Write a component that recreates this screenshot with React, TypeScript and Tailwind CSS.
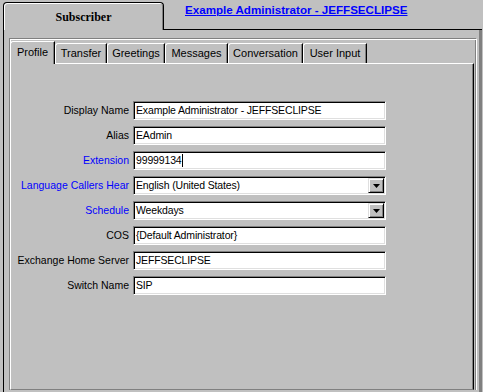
const tabs = [
  { label: "Profile", w: "w-[45px]", active: true },
  { label: "Transfer", w: "w-[52px]" },
  { label: "Greetings", w: "w-[58px]" },
  { label: "Messages", w: "w-[63px]" },
  { label: "Conversation", w: "w-[75px]" },
  { label: "User Input", w: "w-[64px]" },
];

const fields: { label: string; value: string; blue?: boolean; select?: boolean; caret?: boolean }[] = [
  { label: "Display Name", value: "Example Administrator - JEFFSECLIPSE" },
  { label: "Alias", value: "EAdmin" },
  { label: "Extension", value: "99999134", blue: true, caret: true },
  { label: "Language Callers Hear", value: "English (United States)", blue: true, select: true },
  { label: "Schedule", value: "Weekdays", blue: true, select: true },
  { label: "COS", value: "{Default Administrator}" },
  { label: "Exchange Home Server", value: "JEFFSECLIPSE" },
  { label: "Switch Name", value: "SIP" },
];

const Field = ({ value, select, caret }: { value: string; select?: boolean; caret?: boolean }) => (
  <div className="relative w-[253px] h-[19px] bg-white border border-t-[#808080] border-l-[#808080] border-r-white border-b-white shadow-[inset_1px_1px_0_#000,inset_-1px_-1px_0_#dfdfdf] flex items-center pl-[2px]">
    <span className="leading-none whitespace-nowrap tracking-[-0.15px] text-[10.5px]">{value}</span>
    {caret && <span className="w-px h-[13px] bg-black" />}
    {select && (
      <div className="absolute right-[1px] top-[1px] w-[16px] h-[15px] bg-[#c0c0c0] border border-t-[#dfdfdf] border-l-[#dfdfdf] border-r-black border-b-black shadow-[inset_1px_1px_0_#fff,inset_-1px_-1px_0_#808080] flex items-center justify-center">
        <svg width="7" height="4" viewBox="0 0 7 4">
          <path d="M0 0h7L3.5 4z" fill="#000" />
        </svg>
      </div>
    )}
  </div>
);

export default function App() {
  return (
    <div
      className="w-[483px] h-[392px] bg-[#c0c0c0] flex flex-col pl-[3px] pr-[1px] overflow-hidden text-[10.5px] text-black"
      style={{ fontFamily: '"Liberation Sans", Arial, sans-serif' }}
    >
      <div className="h-[30px] flex shrink-0">
        <div className="mt-[2px] w-[161px] h-[28px] border border-b-0 border-black rounded-t-[4px] shadow-[inset_1px_1px_0_#fff,inset_-1px_0_0_#808080] flex items-center justify-center">
          <span
            className="font-bold text-[12px] pt-[1px]"
            style={{ fontFamily: '"Liberation Serif", "Times New Roman", serif' }}
          >
            Subscriber
          </span>
        </div>
        <div className="flex-1 border-b border-black pl-[21px] pt-[3px]">
          <a className="text-[#0000ff] font-bold underline text-[11.6px] leading-[13px] cursor-pointer">
            Example Administrator - JEFFSECLIPSE
          </a>
        </div>
      </div>

      <div className="flex-1 flex flex-col border-l border-black border-r-[3px] border-r-[#808080] pt-[8px] pl-[5px] pr-[2px] pb-[2px]">
        <div className="flex-1 flex flex-col border border-b-0 border-[#808080] border-r-white shadow-[inset_1px_1px_0_#fff,inset_-1px_0_0_#808080] pt-[2px] pr-[2px]">
          <div className="h-[22px] flex items-end shrink-0 relative z-10 text-[11px]">
            {tabs.map((t) => (
              <div
                key={t.label}
                className={`${t.w} ${t.active ? "h-[23px] -mb-px bg-[#c0c0c0] pb-[2px]" : "h-[20px]"} border-t border-l border-white rounded-tl-[3px] border-r border-r-black shadow-[inset_-1px_0_0_#808080] flex items-center justify-center whitespace-nowrap`}
              >
                {t.label}
              </div>
            ))}
          </div>
          <div className="flex-1 border-t border-l border-white border-r border-r-black border-b border-b-[#808080] shadow-[inset_-1px_0_0_#808080] pt-[37px] flex flex-col gap-[6px]">
            {fields.map((f) => (
              <div key={f.label} className="flex items-center">
                <div className={`w-[119px] text-right pr-[1px] pt-[1px] whitespace-nowrap ${f.blue ? "text-[#0000ff]" : ""}`}>
                  {f.label}
                </div>
                <div className="ml-[3px]">
                  <Field value={f.value} select={f.select} caret={f.caret} />
                </div>
              </div>
            ))}
          </div>
        </div>
      </div>
    </div>
  );
}
